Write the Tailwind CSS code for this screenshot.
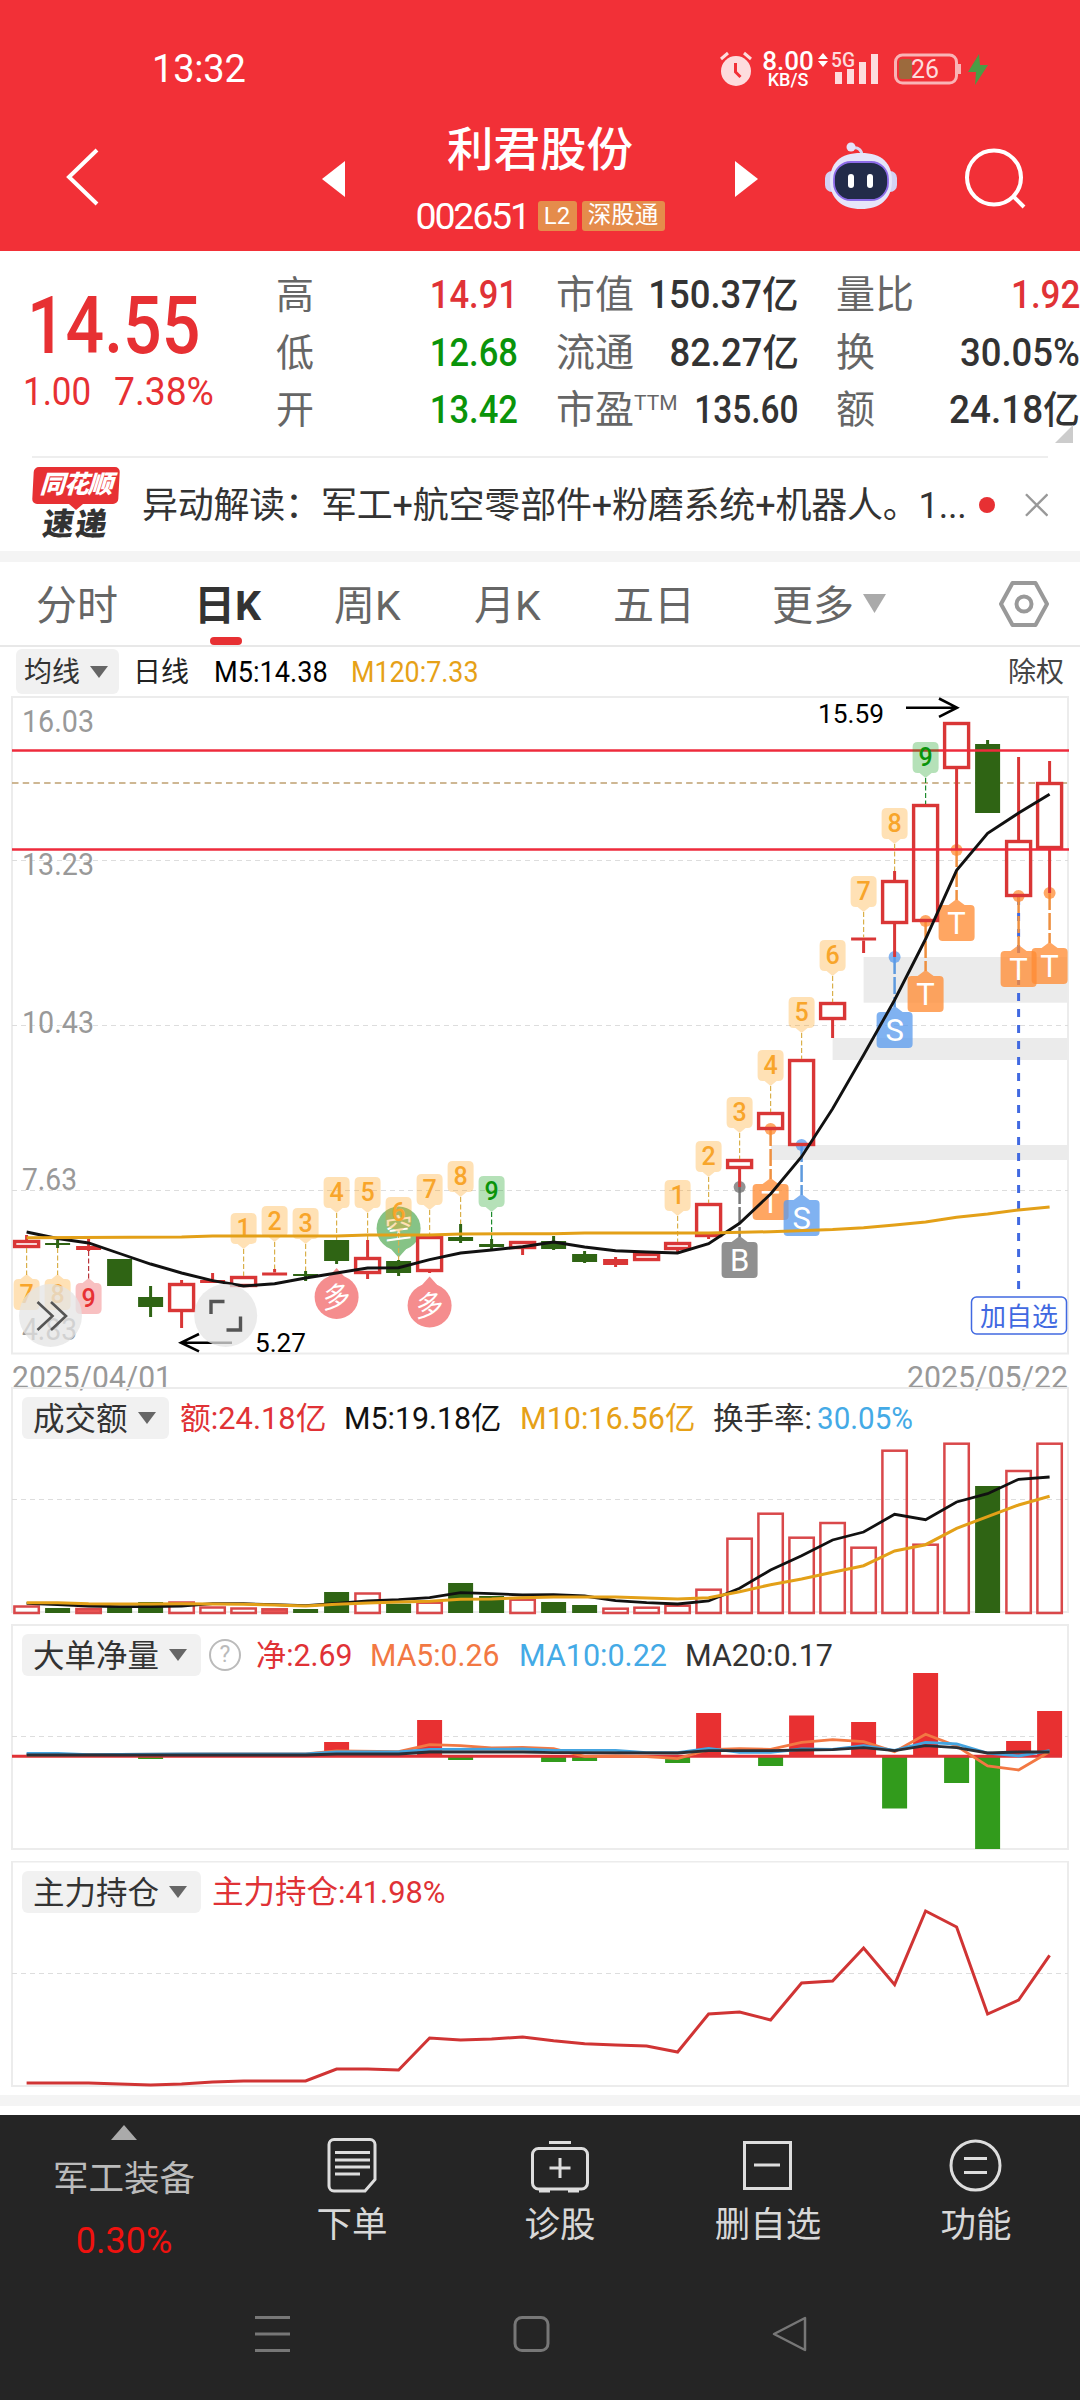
<!DOCTYPE html>
<html lang="zh-CN">
<head>
    <meta charset="UTF-8" />
    <meta name="viewport" content="width=device-width, initial-scale=1.0"/>
    <title>利君股份 002651</title>
    <script src="https://cdn.jsdelivr.net/npm/@tailwindcss/browser@4"></script>
</head>
<body class="w-[1080px] h-[2400px] overflow-hidden bg-white flex flex-col font-['Roboto','Noto_Sans_CJK_SC',sans-serif] text-[#333]">

    <!-- Header -->
    <header class="h-[251px] shrink-0 bg-[#f23037] text-white">
        <div class="h-[110px] pt-[28px] pl-[152px] pr-[90px] flex items-center justify-between">
            <span class="text-[38px] leading-none tracking-[-0.2px]">13:32</span>
            <div class="flex items-center">
                <svg class="w-[32px] h-[36px]" viewBox="0 0 32 36">
                    <circle cx="16" cy="20" r="15" fill="#fddcdd"/>
                    <path d="M1 8L8 2M31 8L24 2" stroke="#fddcdd" stroke-width="3"/>
                    <path d="M15.500 12v9l5 5" fill="none" stroke="#f23037" stroke-width="3"/>
                </svg>
                <div class="ml-[9px] w-[54px] flex flex-col items-center font-medium">
                    <span class="text-[26px] leading-[20px]">8.00</span>
                    <span class="mt-[1px] text-[18px] leading-[16px]">KB/S</span>
                </div>
                <svg class="ml-[2px] w-[62px] h-[34px] overflow-visible" viewBox="817 52 62 34">
                    <path d="M823 53l5 6h-10zM823 67l5-6h-10z" fill="#fff"/>
                    <text x="831" y="67" font-size="21" fill="#fddcdd" font-weight="500" textLength="24" lengthAdjust="spacingAndGlyphs">5G</text>
                    <path d="M835 72h7v12h-7zM847 69h7v15h-7zM859 62h7v22h-7zM871 54h7v30h-7z" fill="#fddcdd"/>
                </svg>
                <svg class="ml-[14px] w-[97px] h-[34px]" viewBox="893 51 97 34">
                    <rect x="899" y="58" width="13" height="20" rx="3" fill="#9c6a3d"/>
                    <rect x="895.500" y="54" width="61" height="28" rx="7" fill="none" stroke="#f9b4b6" stroke-width="3"/>
                    <path d="M959.500 63v10" stroke="#f9b4b6" stroke-width="3"/>
                    <text x="911" y="77" font-size="25" fill="#fddcdd" textLength="28" lengthAdjust="spacingAndGlyphs">26</text>
                    <path d="M979 53l-11 18h8l-1 13 13-20h-8z" fill="#4a9c45"/>
                </svg>
            </div>
        </div>
        <div class="relative h-[141px] flex items-start">
            <svg class="ml-[64px] mt-[37px] w-[38px] h-[60px]" viewBox="0 0 38 60" fill="none" stroke="#fff" stroke-width="4"><path d="M33 3L5 30l28 27"/></svg>
            <svg class="ml-[220px] mt-[51px] w-[23px] h-[36px]" viewBox="0 0 23 36" fill="#fff"><path d="M0 18L23 0v36z"/></svg>
            <div class="w-[390px] pt-[13px] flex flex-col items-center">
                <h1 class="text-[46.5px] leading-[54px] font-medium">利君股份</h1>
                <div class="mt-[23px] flex items-center gap-[5px]">
                    <span class="w-[117px] text-[37.500px] leading-[32px] tracking-[-2.2px]">002651</span>
                    <span class="w-[39px] h-[30px] rounded-[3px] bg-[#e58c4b] text-[24px] leading-[30px] text-center">L2</span>
                    <span class="w-[83px] h-[30px] rounded-[3px] bg-[#e58c4b] text-[23.5px] leading-[29px] text-center">深股通</span>
                </div>
            </div>
            <svg class="mt-[51px] w-[23px] h-[36px]" viewBox="0 0 23 36" fill="#fff"><path d="M23 18L0 0v36z"/></svg>
            <svg class="ml-[65px] mt-[31px] w-[76px] h-[72px]" viewBox="823 141 76 72">
                <path d="M862 156c0-6-4-9-9-8" fill="none" stroke="#d9d8f2" stroke-width="3"/>
                <circle cx="851" cy="147" r="4.500" fill="#e4e3fa"/>
                <rect x="825" y="171" width="72" height="21" rx="7" fill="#d3d2f4"/>
                <path d="M861 153c21 0 31 10 31 28s-12 28-31 28-31-10-31-28 10-28 31-28z" fill="#e6e5fa"/>
                <rect x="834" y="162" width="54" height="38" rx="17" fill="#222b49" stroke="#8d6be8" stroke-width="1.800"/>
                <rect x="848" y="174" width="6" height="14" rx="3" fill="#fff"/>
                <rect x="867" y="174" width="6" height="14" rx="3" fill="#fff"/>
            </svg>
            <svg class="ml-[64px] mt-[35px] w-[66px] h-[66px]" viewBox="963 145 66 66" fill="none" stroke="#fff" stroke-width="4"><circle cx="994" cy="177.500" r="27"/><path d="M1013 196l11 11"/></svg>
        </div>
    </header>

    <!-- Quote -->
    <section class="relative h-[205px] shrink-0 pt-[16px] flex">
        <div class="w-[276px] text-[#e73033]">
            <p class="origin-left scale-x-[0.86] ml-[27px] mt-[23px] text-[79px] leading-[72px] font-medium">14.55</p>
            <div class="mt-[10px] flex text-[38px] leading-[40px]">
                <span class="origin-left scale-x-[0.92] ml-[23px] w-[91px]">1.00</span>
                <span class="origin-left scale-x-[0.98]">7.38%</span>
            </div>
        </div>
        <div class="w-[242px] flex flex-col text-[38px] leading-[57.500px]">
            <div class="flex justify-between"><span class="text-[#666]">高</span><span class="origin-right scale-x-[0.91] font-medium text-[#e03236]">14.91</span></div>
            <div class="flex justify-between"><span class="text-[#666]">低</span><span class="origin-right scale-x-[0.91] font-medium text-[#0a940a]">12.68</span></div>
            <div class="flex justify-between"><span class="text-[#666]">开</span><span class="origin-right scale-x-[0.91] font-medium text-[#0a940a]">13.42</span></div>
        </div>
        <div class="ml-[38px] w-[243px] flex flex-col text-[38px] leading-[57.500px] whitespace-nowrap">
            <div class="flex justify-between"><span class="w-[76px] text-[39px] text-[#666]">市值</span><span class="origin-right scale-x-[0.96] font-medium">150.37亿</span></div>
            <div class="flex justify-between"><span class="w-[76px] text-[39px] text-[#666]">流通</span><span class="origin-right scale-x-[0.96] font-medium">82.27亿</span></div>
            <div class="flex justify-between"><span class="w-[76px] flex text-[39px] text-[#666]">市盈<span class="text-[21px] leading-[42px]">TTM</span></span><span class="origin-right scale-x-[0.88] font-medium">135.60</span></div>
        </div>
        <div class="ml-[37px] w-[244px] flex flex-col text-[38px] leading-[57.500px] whitespace-nowrap">
            <div class="flex justify-between"><span class="text-[39px] text-[#666]">量比</span><span class="origin-right scale-x-[0.92] font-medium text-[#e03236]">1.92</span></div>
            <div class="flex justify-between"><span class="text-[39px] text-[#666]">换</span><span class="origin-right scale-x-[0.96] font-medium">30.05%</span></div>
            <div class="flex justify-between"><span class="text-[39px] text-[#666]">额</span><span class="origin-right scale-x-[0.97] font-medium">24.18亿</span></div>
        </div>
        <svg class="absolute right-[7px] bottom-[13px] w-[18px] h-[18px]" viewBox="0 0 18 18"><path d="M18 0v18H0z" fill="#ccc"/></svg>
    </section>

    <!-- News strip -->
    <section class="h-[95px] shrink-0 mx-[32px] border-t-2 border-[#eee] flex items-center whitespace-nowrap">
        <div class="w-[90px] flex flex-col items-center self-start pt-[9px] font-black">
            <div class="w-[86px] h-[37px] -skew-x-3 rounded-[5px] bg-[#e73033] text-white text-[25px] leading-[36px] tracking-[-1px] text-center italic">同花顺</div>
            <svg class="w-[14px] h-[6px]" viewBox="0 0 14 6"><path d="M0 0h14L7 6z" fill="#e73033"/></svg>
            <div class="-skew-x-8 text-[31px] leading-[30px] tracking-[2px] text-[#333]">速递</div>
        </div>
        <p class="ml-[22px] w-[824px] text-[36px] leading-[40px] tracking-[-0.2px] pt-[3px]">异动解读：军工+航空零部件+粉磨系统+机器人。1...</p>
        <span class="ml-[13px] w-[16px] h-[16px] rounded-full bg-[#e73033]"></span>
        <svg class="ml-[30px] w-[24px] h-[24px]" viewBox="0 0 24 24" stroke="#999" stroke-width="2.500"><path d="M1 1l22 22M23 1L1 23"/></svg>
    </section>
    <div class="h-[11px] shrink-0 bg-[#f4f4f4]"></div>

    <!-- Period tabs -->
    <nav class="h-[85px] shrink-0 border-b-2 border-[#e8e8e8] flex items-center text-[41px] leading-none text-[#666] whitespace-nowrap">
        <span class="ml-[36px] w-[158px] pt-[5px]">分时</span>
        <span class="relative w-[140px] h-full pt-[5px] flex items-center font-bold text-[#333]">日K<i class="absolute left-[16px] bottom-0 w-[32px] h-[8px] rounded-full bg-[#e73033]"></i></span>
        <span class="w-[140px] pt-[5px]">周K</span>
        <span class="w-[139px] pt-[5px]">月K</span>
        <span class="w-[159px] pt-[5px]">五日</span>
        <span class="w-[91px] pt-[5px]">更多</span>
        <svg class="w-[23px] h-[19px]" viewBox="0 0 23 19"><path d="M0 0h23L11.500 19z" fill="#aaa"/></svg>
        <svg class="ml-[113px] w-[50px] h-[48px]" viewBox="0 0 50 48" fill="none" stroke="#999" stroke-width="4"><path d="M13.500 3h23L48 24 36.500 45h-23L2 24z" stroke-linejoin="round"/><circle cx="25" cy="24" r="7.500"/></svg>
    </nav>
    <div class="h-[49px] shrink-0 pl-[16px] pr-[16px] flex items-center text-[28px] leading-none whitespace-nowrap">
        <div class="w-[103px] h-[45px] rounded-[6px] bg-[#f1f1f1] pl-[8px] flex items-center gap-[10px]"><span class="pt-[3px]">均线</span><svg class="w-[18px] h-[12px]" viewBox="0 0 18 12"><path d="M0 0h18L9 12z" fill="#666"/></svg></div>
        <span class="ml-[14px] w-[81px] pt-[3px] text-[#222]">日线</span>
        <span class="origin-left scale-x-[0.92] w-[137px] pt-[3px] text-[29.500px] text-black">M5:14.38</span>
        <span class="origin-left scale-x-[0.91] pt-[3px] text-[29.500px] text-[#e6a117]">M120:7.33</span>
        <span class="ml-auto pt-[3px] text-[#444]">除权</span>
    </div>

    <!-- Charts -->
    <svg id="kline" class="w-[1080px] h-[691px] shrink-0 overflow-visible" viewBox="0 696 1080 691"></svg>

    <section class="relative h-[237px] shrink-0">
        <svg id="volume" class="absolute inset-0 w-full h-full" viewBox="0 1387 1080 237"></svg>
        <div class="relative pt-[10px] pl-[22px] flex items-center text-[30.500px] leading-none whitespace-nowrap">
            <div class="w-[147px] h-[42px] mr-[11px] rounded-[6px] bg-[#f1f1f1] pl-[11px] flex items-center gap-[10px] text-[31.500px]"><span class="pt-[3px]">成交额</span><svg class="w-[18px] h-[12px]" viewBox="0 0 18 12"><path d="M0 0h18L9 12z" fill="#666"/></svg></div>
            <span class="origin-left scale-x-[1.01] w-[164px] pt-[2px] text-[#e03236]">额:24.18亿</span>
            <span class="origin-left scale-x-[0.995] w-[176px] pt-[2px] text-[#111]">M5:19.18亿</span>
            <span class="origin-left w-[193px] pt-[2px] text-[#e6a117]">M10:16.56亿</span>
            <span class="w-[104px] pt-[2px]">换手率:</span>
            <span class="origin-left scale-x-[0.97] pt-[2px] text-[#44aae6]">30.05%</span>
        </div>
    </section>

    <section class="relative h-[237px] shrink-0">
        <svg id="netflow" class="absolute inset-0 w-full h-full" viewBox="0 1624 1080 237"></svg>
        <div class="relative pt-[10px] pl-[22px] flex items-center text-[30.500px] leading-none whitespace-nowrap">
            <div class="w-[179px] h-[42px] mr-[8px] rounded-[6px] bg-[#f1f1f1] pl-[11px] flex items-center gap-[10px] text-[31.500px]"><span class="pt-[3px]">大单净量</span><svg class="w-[18px] h-[12px]" viewBox="0 0 18 12"><path d="M0 0h18L9 12z" fill="#666"/></svg></div>
            <span class="mr-[15px] w-[32px] h-[32px] rounded-full border-[2.500px] border-[#bbb] text-[23px] leading-[27px] text-center text-[#bbb]">?</span>
            <span class="origin-left scale-x-[0.99] w-[114px] pt-[2px] text-[#e03236]">净:2.69</span>
            <span class="origin-left scale-x-[0.99] w-[149px] pt-[2px] text-[#f27843]">MA5:0.26</span>
            <span class="origin-left w-[166px] pt-[2px] text-[#44aae6]">MA10:0.22</span>
            <span class="origin-left pt-[2px]">MA20:0.17</span>
        </div>
    </section>

    <section class="relative h-[234px] shrink-0">
        <svg id="holding" class="absolute inset-0 w-full h-full" viewBox="0 1861 1080 234"></svg>
        <div class="relative pt-[10px] pl-[22px] flex items-center text-[30.500px] leading-none whitespace-nowrap">
            <div class="w-[179px] h-[42px] mr-[11px] rounded-[6px] bg-[#f1f1f1] pl-[11px] flex items-center gap-[10px] text-[31.500px]"><span class="pt-[3px]">主力持仓</span><svg class="w-[18px] h-[12px]" viewBox="0 0 18 12"><path d="M0 0h18L9 12z" fill="#666"/></svg></div>
            <span class="pt-[2px] text-[31.500px] text-[#e03236]">主力持仓</span>
            <span class="origin-left scale-x-[1.01] pt-[2px] text-[#e03236]">:41.98%</span>
        </div>
    </section>
    <div class="h-[20px] shrink-0 border-t-[11px] border-[#f4f4f4]"></div>

    <!-- Bottom bar -->
    <footer class="flex-1 bg-[#252525] text-[#d8d8d8]">
        <div class="flex h-[150px] text-[35.500px] leading-none text-center">
            <div class="w-[248px] pt-[10px] flex flex-col items-center">
                <svg class="w-[26px] h-[15px]" viewBox="0 0 26 15"><path d="M13 0l13 15H0z" fill="#aaa"/></svg>
                <span class="mt-[22px] text-[#bbb]">军工装备</span>
                <span class="mt-[25px] text-[36px] text-[#f0120f]">0.30%</span>
            </div>
            <div class="w-[208px] pt-[21px] flex flex-col items-center">
                <svg class="w-[60px] h-[58px]" viewBox="322 2136 60 58" fill="none" stroke="#ddd" stroke-width="3"><path d="M334 2139.500h36a5 5 0 0 1 5 5v35l-10 11.500h-31a5 5 0 0 1-5-5v-41.500a5 5 0 0 1 5-5zM335 2152.500h35M335 2160h35M335 2167h35M335 2174h25"/></svg>
                <span class="mt-[14px]">下单</span>
            </div>
            <div class="w-[208px] pt-[21px] flex flex-col items-center">
                <svg class="w-[60px] h-[58px]" viewBox="530 2136 60 58" fill="none" stroke="#ddd" stroke-width="3"><rect x="532.500" y="2148.500" width="55" height="40.500" rx="6"/><path d="M549 2142.500h22M560 2158v20M549.500 2168h21M539 2191h11M568 2191h11"/></svg>
                <span class="mt-[14px]">诊股</span>
            </div>
            <div class="w-[208px] pt-[21px] flex flex-col items-center">
                <svg class="w-[60px] h-[58px]" viewBox="738 2136 60 58" fill="none" stroke="#ddd" stroke-width="3"><path d="M744.500 2142.500h46v46h-46zM754 2165h26"/></svg>
                <span class="mt-[14px]">删自选</span>
            </div>
            <div class="w-[208px] pt-[21px] flex flex-col items-center">
                <svg class="w-[60px] h-[58px]" viewBox="946 2136 60 58" fill="none" stroke="#ddd" stroke-width="3"><circle cx="975.500" cy="2165.500" r="24.500"/><path d="M964 2158.500h23M964 2172.500h23"/></svg>
                <span class="mt-[14px]">功能</span>
            </div>
        </div>
        <div class="mt-[50px] pl-[254px] flex gap-[222px]">
            <svg class="w-[37px] h-[38px]" viewBox="0 0 37 38" stroke="#777" stroke-width="3"><path d="M1 2.500h35M1 19h35M1 35.500h35"/></svg>
            <svg class="w-[37px] h-[38px]" viewBox="0 0 37 38" fill="none" stroke="#777" stroke-width="3"><rect x="2" y="2.500" width="33" height="33" rx="7"/></svg>
            <svg class="w-[37px] h-[38px]" viewBox="0 0 37 38" fill="none" stroke="#777" stroke-width="2.500" stroke-linejoin="round"><path d="M33 3v32L2 19z"/></svg>
        </div>
    </footer>

    <script>
        const RED = '#d93636', GREEN = '#2f6414', BLUE = '#4169e1';
        const X = i => +(26.6 + 31 * i).toFixed(1);

        const line = (x1, y1, x2, y2, c, w = 2, dash = '') =>
            `<line x1="${x1}" y1="${y1}" x2="${x2}" y2="${y2}" stroke="${c}" stroke-width="${w}" stroke-dasharray="${dash}"/>`;
        const rect = (x, y, w, h, attrs) => `<rect x="${x}" y="${y}" width="${w}" height="${h}" ${attrs}/>`;
        const label = (x, y, s, size, c, len) =>
            `<text x="${x}" y="${y}" font-size="${size}" fill="${c}" textLength="${len}" lengthAdjust="spacingAndGlyphs">${s}</text>`;
        const mid = (x, y, s, size, c, weight = 400) =>
            `<text x="${x}" y="${y}" font-size="${size}" fill="${c}" font-weight="${weight}" text-anchor="middle">${s}</text>`;
        // points: one y per bar, or [index, y] pairs
        const curve = (pts, c, w = 3) =>
            `<polyline fill="none" stroke="${c}" stroke-width="${w}" points="${pts.map((p, i) => Array.isArray(p) ? X(p[0]) + ',' + p[1] : X(i) + ',' + p).join(' ')}"/>`;
        const frame = (y1, y2) => rect(12, y1, 1056, y2 - y1, 'fill="none" stroke="#ececec" stroke-width="2"');

        // ---- K line ----
        // [type, high, bodyTop, bodyBottom, low]
        const candles = [
            ['r', 1235, 1240, 1248, 1248], ['g', 1240, 1243, 1245, 1248], ['f', 1239, 1246, 1250, 1251], ['g', 1259, 1259, 1286, 1286],
            ['g', 1286, 1297, 1307, 1317], ['r', 1280, 1283, 1312, 1328], ['f', 1273, 1280, 1283, 1283], ['r', 1276, 1276, 1287, 1287],
            ['f', 1269, 1272.5, 1275.5, 1275.5], ['g', 1271, 1274, 1276, 1281], ['g', 1240, 1240, 1261, 1264], ['r', 1240, 1257, 1274, 1279],
            ['g', 1260, 1261, 1273, 1276], ['r', 1236, 1236, 1272, 1273], ['g', 1224, 1237, 1241, 1243], ['g', 1239, 1244, 1247, 1249],
            ['r', 1241, 1241, 1249, 1255], ['g', 1236, 1241, 1249, 1250], ['g', 1251, 1254, 1262, 1263], ['f', 1257, 1259, 1265, 1267],
            ['r', 1253, 1253, 1261, 1261], ['r', 1242, 1242, 1250, 1252], ['r', 1203, 1203, 1237, 1239], ['r', 1159, 1159, 1169, 1187],
            ['r', 1112, 1112, 1130, 1130], ['r', 1059, 1059, 1146, 1146], ['r', 1002, 1002, 1020, 1038], ['f', 937.5, 937.5, 940.5, 953],
            ['r', 871, 880, 924, 957], ['r', 804, 804, 922, 922], ['r', 722, 722, 769, 850], ['g', 740, 744, 813, 813],
            ['r', 757, 840, 897, 897], ['r', 761, 782, 849, 893]
        ];

        let k = frame(697, 1353.5);
        k += rect(863.6, 957, 204, 45.7, 'fill="#ebebeb"') + rect(832.6, 1038, 235, 22, 'fill="#ebebeb"') + rect(771, 1145, 297, 15, 'fill="#ebebeb"');
        [860.5, 1025.5, 1190.5].forEach(y => k += line(12, y, 1068, y, '#ddd', 1.2, '5 4'));
        k += label(22, 732, '16.03', 31, '#999', 72) + label(22, 875, '13.23', 31, '#999', 72) + label(22, 1033, '10.43', 31, '#999', 72)
           + label(22, 1190, '7.63', 31, '#999', 55) + label(22, 1340, '4.83', 31, '#999', 55)
           + label(12, 1387.5, '2025/04/01', 31.5, '#999', 160) + label(907, 1387.5, '2025/05/22', 31.5, '#999', 161);
        k += line(12, 783, 1068, 783, '#bfa070', 1.5, '6.5 4.2');

        // long / short balloons
        const balloon = (x, cy, s, c, dir) =>
            `<g><path d="M${x - 9} ${cy + dir * 19}L${x} ${cy + dir * 29}L${x + 9} ${cy + dir * 19}z" fill="${c}"/><circle cx="${x}" cy="${cy}" r="22" fill="${c}"/></g>`
            + `<g transform="translate(${x} ${cy}) rotate(-8) skewX(-8)">${mid(0, 10, s, 28, '#fff')}</g>`;
        k += '<g opacity="0.9">' + balloon(X(10), 1297, '多', '#f58182', -1) + balloon(X(13), 1305.500, '多', '#f58182', -1) + '</g>'
           + '<g opacity="0.8">' + balloon(X(12), 1228.500, '空', '#68b568', 1) + '</g>';

        // trade marks: [index, dotY, boxY, letter, fill, line]
        const OR = ['#ff8b33', '#ee9040'], BL = ['#5a9bed', '#5e9ade'], GY = ['#6e6e6e', '#777'];
        k += line(X(32), 897, X(32), 1297, BLUE, 3, '8 8');
        [[23, 1187, 1242, 'B', GY], [24, 1129, 1184, 'T', OR], [25, 1145, 1200, 'S', BL], [28, 957, 1012, 'S', BL],
         [29, 921, 976, 'T', OR], [30, 850, 905, 'T', OR], [32, 896, 951, 'T', OR], [33, 893, 948, 'T', OR]].forEach(([i, d, b, s, c]) => {
            const x = X(i);
            k += line(x, d, x, b - 5, c[1], 2.5, '17 3') + `<circle cx="${x}" cy="${d}" r="6" fill="${c[0]}" opacity="0.75"/>`
               + `<path d="M${x - 14} ${b}h6l8-6 8 6h6q4 0 4 4v28q0 4-4 4h-28q-4 0-4-4v-28q0-4 4-4z" fill="${c[0]}" opacity="0.77"/>`
               + mid(x, b + 29, s, 31, '#fff');
        });

        candles.forEach(([t, h, a, b, l], i) => {
            const x = X(i), c = t === 'g' ? GREEN : RED;
            if (h < a) k += line(x, h, x, a, c, 3);
            if (l > b) k += line(x, b, x, l, c, 3);
            if (t === 'r') k += rect(x - 12, a + 1.5, 24, b - a - 3, `fill="none" stroke="${c}" stroke-width="3.4"`);
            else k += rect(x - 12.5, a, 25, b - a, `fill="${c}"`);
        });
        k += line(12, 750.5, 1069, 750.5, '#ee2b3c', 2.6) + line(12, 849.5, 1069, 849.5, '#ee2b3c', 2.6);

        // nine-turn badges above the bars: [index, top, number]
        [[7, 1213, 1], [8, 1206, 2], [9, 1208, 3], [10, 1177, 4], [11, 1177, 5], [12, 1197, 6], [13, 1174, 7], [14, 1161, 8], [15, 1176, 9],
         [21, 1180, 1], [22, 1141, 2], [23, 1097, 3], [24, 1050, 4], [25, 997, 5], [26, 940, 6], [27, 876, 7], [28, 808, 8], [29, 742, 9]].forEach(([i, y, n]) => {
            const x = X(i), g = n === 9;
            k += line(x, y + 36, x, candles[i][1], g ? '#1c8a2c' : '#d9b04a', 1.2, '5 2.5')
               + `<path d="M${x - 8} ${y}h16q5 0 5 5v21q0 5-5 5h-2l-6 5-6-5h-2q-5 0-5-5v-21q0-5 5-5z" fill="${g ? '#0a9a14' : '#ff9d0a'}" opacity="0.3"/>`
               + mid(x, y + 23.5, n, 25, g ? '#0a940a' : '#f8a52a', 500);
        });
        // and below
        [[0, 1279, 7], [1, 1279, 8], [2, 1283, 9]].forEach(([i, y, n]) => {
            const x = X(i), r = n === 9;
            k += line(x, candles[i][4], x, y - 4, r ? '#b8343a' : '#d9b04a', 1.2, '5 2.5')
               + `<path d="M${x - 8} ${y}h2l6-5 6 5h2q5 0 5 5v21q0 5-5 5h-16q-5 0-5-5v-21q0-5 5-5z" fill="${r ? '#e73033' : '#ff9d0a'}" opacity="0.3"/>`
               + mid(x, y + 23.5, n, 25, r ? '#e73033' : '#f8a52a', 500);
        });

        k += curve([1232, 1238.5, 1243, 1253.5, 1264, 1273, 1280.7, 1286, 1283.7, 1278, 1273, 1268, 1267.7, 1259.7, 1253, 1250, 1246.7, 1242, 1247,
            1250.7, 1252, 1253, 1243.7, 1223.3, 1194, 1156.7, 1108.7, 1055, 1000, 939, 870.3, 833.3, 813, 794.3], '#111', 2.9);
        k += curve([[0, 1237.7], [5, 1237], [6, 1236], [10, 1236], [11, 1235], [13, 1235], [14, 1234], [17, 1233.7], [18, 1233], [22, 1233], [24, 1231.7],
            [26, 1229.5], [27, 1227.7], [28, 1225], [29, 1222], [30, 1217.3], [31, 1214], [32, 1210], [33, 1207]], '#e3a018', 3);

        // high / low callouts
        k += label(818, 723, '15.59', 26, '#000', 66) + '<path d="M906 707.700h50M939 698.500l18 9.200-18 9.200" fill="none" stroke="#000" stroke-width="2.600"/>'
           + label(255, 1352, '5.27', 26, '#000', 51) + '<path d="M232 1342.700h-50M199 1334l-18 8.700 18 8.700" fill="none" stroke="#000" stroke-width="2.600"/>';
        k += rect(971.5, 1297, 95, 37, `rx="5" fill="#fff" stroke="${BLUE}" stroke-width="1.5"`) + mid(1019, 1326, '加自选', 26, BLUE);

        // floating buttons
        k += '<circle cx="50.500" cy="1315.500" r="31.500" fill="#e4e4e4" opacity="0.75"/><path d="M37.500 1302l15 14-15 14M51 1302l15 14-15 14" fill="none" stroke="#555" stroke-width="2.600"/>'
           + '<circle cx="225.700" cy="1315.500" r="31.500" fill="#e4e4e4" opacity="0.75"/><path d="M211 1314v-12.500h13.500M240.500 1316.500v13.500h-14" fill="none" stroke="#555" stroke-width="3.400"/>';
        document.getElementById('kline').innerHTML = k;

        // ---- Turnover ----
        const volTop = [1605.5, 1608, 1608, 1606.7, 1602, 1601.5, 1606.5, 1607.5, 1608.3, 1609, 1592, 1592.5, 1603.7, 1601.7, 1583, 1596, 1598.7,
            1602, 1605, 1607.7, 1606.7, 1604.7, 1588.7, 1537.7, 1512.7, 1536.7, 1522, 1546.7, 1449.7, 1543.7, 1442.7, 1486, 1470, 1442.7];
        let v = frame(1388, 1612) + line(12, 1499.5, 1068, 1499.5, '#ddd', 1.2, '5 4');
        volTop.forEach((y, i) => {
            const g = candles[i][0] === 'g';
            v += g ? rect(X(i) - 12.5, y, 25, 1613 - y, `fill="${GREEN}"`)
                   : rect(X(i) - 12.2, y + 1, 24.4, 1612 - y, `fill="${i === 2 || i === 8 ? '#ee5555' : 'none'}" stroke="#d9484a" stroke-width="2.5"`);
        });
        v += curve([1603.3, 1604.7, 1606, 1606.7, 1606.7, 1606, 1603.7, 1603.7, 1604.7, 1605.7, 1603.3, 1601, 1599.7, 1597.7, 1592.7, 1593.7, 1595, 1594.7,
            1596, 1600.7, 1602.7, 1604, 1601, 1588.3, 1570, 1555.7, 1540, 1532, 1514.3, 1519.7, 1502, 1493.7, 1479.3, 1477], '#111', 2.8);
        v += curve([1602.7, 1602.7, 1603.7, 1604, 1604, 1603.7, 1604, 1604.3, 1605, 1606, 1604.3, 1603, 1602, 1601.3, 1599.3, 1599, 1597.7, 1597, 1597, 1597,
            1598, 1599, 1597.7, 1591.7, 1584.7, 1579, 1572.3, 1565.7, 1551, 1544.7, 1528.3, 1516.7, 1505, 1496.3], '#e3a018', 3);
        document.getElementById('volume').innerHTML = v;

        // ---- Net big orders ----
        let n = frame(1625, 1849) + line(12, 1736.5, 1068, 1736.5, '#ddd', 1.2, '5 4');
        [[10, 1742], [13, 1720], [22, 1713], [25, 1715.5], [27, 1722], [29, 1673], [32, 1741], [33, 1711]]
            .forEach(([i, y]) => n += rect(X(i) - 12.5, y, 25, 1756 - y, 'fill="#e83031"'));
        [[4, 1759], [14, 1760], [17, 1762], [18, 1761], [21, 1763], [24, 1766], [28, 1808.5], [30, 1783], [31, 1849]]
            .forEach(([i, y]) => n += rect(X(i) - 12.5, 1756, 25, y - 1756, 'fill="#329b1c"'));
        n += line(12, 1756.3, 1062, 1756.3, '#e03236', 3);
        n += curve([[0, 1755], [6, 1754], [9, 1754], [10, 1751], [12, 1751.7], [13, 1744.7], [14, 1745.7], [15, 1748], [16, 1747.3], [17, 1748.7], [18, 1756.3],
            [19, 1756], [20, 1756.7], [21, 1758.7], [22, 1749.7], [23, 1748.7], [24, 1749.3], [25, 1742.3], [26, 1739.7], [27, 1741.7], [28, 1751.7],
            [29, 1734.3], [30, 1746], [31, 1766], [32, 1770], [33, 1751.7]], '#f27843', 2.8);
        n += curve([[0, 1753.3], [1, 1753.3], [2, 1754.7], [5, 1754], [9, 1754], [10, 1752], [12, 1752], [13, 1749.3], [16, 1749], [17, 1750.3], [19, 1750.3],
            [20, 1752.7], [21, 1752.7], [22, 1748.3], [23, 1752.3], [24, 1752.3], [25, 1749], [26, 1749.3], [27, 1745.7], [28, 1750.3], [29, 1742.3],
            [30, 1744], [31, 1753], [32, 1756], [33, 1750.7]], '#44a4e0', 2.8);
        n += curve([[0, 1755], [9, 1755], [10, 1754], [12, 1754], [13, 1752], [16, 1752], [17, 1752.7], [21, 1753], [22, 1750.7], [24, 1750.7], [25, 1750],
            [26, 1749.7], [27, 1747.7], [28, 1750.7], [29, 1745.7], [30, 1747.7], [31, 1753], [32, 1752], [33, 1752]], '#2b2f36', 2.8);
        document.getElementById('netflow').innerHTML = n;

        // ---- Main force holding ----
        let m = frame(1861.5, 2086) + line(12, 1973.5, 1068, 1973.5, '#ddd', 1.2, '5 4');
        m += curve([2083, 2083, 2083, 2084, 2085, 2084, 2082, 2081, 2081, 2081, 2069, 2069, 2070, 2038, 2040, 2039, 2037, 2040.7, 2043.7, 2045, 2046, 2052,
            2014, 2012, 2020, 1983, 1981, 1948, 1984.7, 1911, 1927, 2014, 2000, 1955.3], '#d03434', 3);
        document.getElementById('holding').innerHTML = m;
    </script>
</body>
</html>
